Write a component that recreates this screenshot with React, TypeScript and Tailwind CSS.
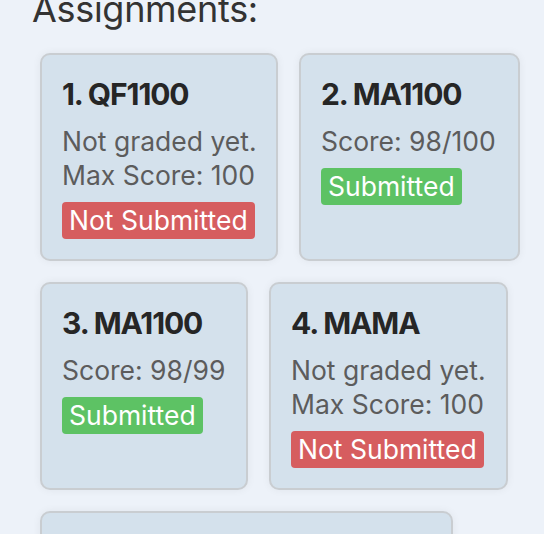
import React from 'react';

type Assignment = {
  id: number;
  code: string;
  score: number | null;
  maxScore: number;
  submitted: boolean;
  width: string;
};

const assignments: Assignment[] = [
  { id: 1, code: 'QF1100', score: null, maxScore: 100, submitted: false, width: 'w-[238px]' },
  { id: 2, code: 'MA1100', score: 98, maxScore: 100, submitted: true, width: 'w-[221px]' },
  { id: 3, code: 'MA1100', score: 98, maxScore: 99, submitted: true, width: 'w-[208px]' },
  { id: 4, code: 'MAMA', score: null, maxScore: 100, submitted: false, width: 'w-[239px]' },
  { id: 5, code: 'QF1100 Final Project', score: null, maxScore: 100, submitted: false, width: 'w-[413px]' },
];

function AssignmentCard({ a }: { a: Assignment }) {
  return (
    <div
      className={`${a.width} whitespace-nowrap rounded-[10px] border-2 border-[#c9cdd1] bg-[#d4e1ec] p-5 shadow-[0_0_8px_rgba(0,0,0,0.06)]`}
    >
      <h2 className="mb-[11px] text-[30px] font-bold leading-[38px] tracking-[-1.1px] text-[#262626]">
        {a.id}. {a.code}
      </h2>
      {a.score === null ? (
        <div className="text-[26.5px] leading-[34px] text-[#5c5c5c]">
          <p>Not graded yet.</p>
          <p>Max Score: {a.maxScore}</p>
        </div>
      ) : (
        <p className="text-[26.5px] leading-[34px] text-[#5c5c5c]">
          Score: {a.score}/{a.maxScore}
        </p>
      )}
      <span
        className={`mt-[10px] inline-block rounded-[4px] px-[7px] py-[2px] text-[26.5px] leading-[33px] text-white ${
          a.submitted ? 'bg-[#5dc264]' : 'bg-[#d65d5f]'
        }`}
      >
        {a.submitted ? 'Submitted' : 'Not Submitted'}
      </span>
    </div>
  );
}

export default function App() {
  return (
    <div className="h-[534px] overflow-hidden bg-[#edf2f9] font-['Inter','Noto_Sans',sans-serif]">
      <h1 className="-mt-[11px] pl-8 text-[36px] leading-[40px] tracking-[-0.3px] text-[#333]">
        Assignments:
      </h1>
      <div className="mt-[24px] flex flex-wrap items-stretch gap-[21px] pl-10 pr-5">
        {assignments.map((a) => (
          <AssignmentCard key={a.id} a={a} />
        ))}
      </div>
    </div>
  );
}
